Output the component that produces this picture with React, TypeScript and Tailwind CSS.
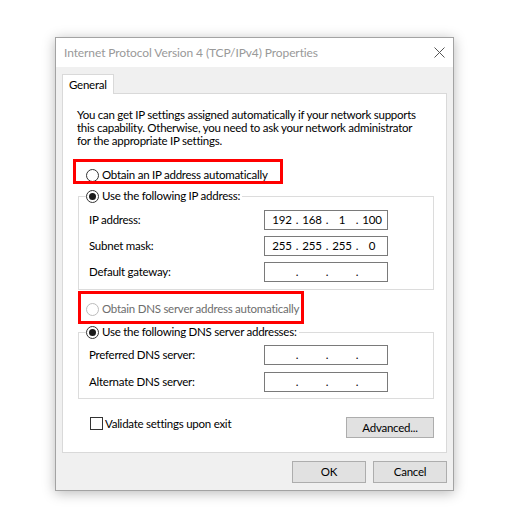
import React from 'react'

const FONT = { fontFamily: '"Segoe UI", Lato, "Noto Sans", sans-serif' }

function Radio({ checked = false, disabled = false }: { checked?: boolean; disabled?: boolean }) {
  return (
    <span
      className={`w-[13px] h-[13px] rounded-full border bg-white flex items-center justify-center shrink-0 ${
        disabled ? 'border-[#bcbcbc]' : 'border-[#333333]'
      }`}
    >
      {checked && <span className="w-[7px] h-[7px] rounded-full bg-[#1a1a1a]" />}
    </span>
  )
}

// windows ip control: 4 fields with dots between
function IpBox({ value }: { value?: string[] }) {
  const parts = value ?? ['', '', '', '']
  return (
    <div className="w-[124px] h-[20px] border border-[#7a7a7a] bg-white flex items-center pl-[5px] text-black">
      {parts.map((p, i) => (
        <React.Fragment key={i}>
          <span className="w-[24px] text-center">{p}</span>
          {i < 3 && <span className="w-[6px] text-center">.</span>}
        </React.Fragment>
      ))}
    </div>
  )
}

function Row({ label, value }: { label: string; value?: string[] }) {
  return (
    <div className="flex items-center h-[20px]">
      <span className="w-[175px]">{label}</span>
      <IpBox value={value} />
    </div>
  )
}

export default function App() {
  return (
    <div
      className="w-[523px] h-[532px] bg-white pt-[37px] pl-[55px] text-[11.5px] tracking-[-0.25px] text-black"
      style={FONT}
    >
      <div className="w-[399px] h-[454px] border border-[#a3a3a3] bg-[#f0f0f0] flex flex-col shadow-[0_2px_12px_rgba(0,0,0,0.28)]">
        {/* title bar */}
        <div className="h-[29px] bg-white flex items-center justify-between pl-[8px] pr-[8px] shrink-0">
          <span className="text-[#999999] text-[12px] tracking-[-0.1px]">
            Internet Protocol Version 4 (TCP/IPv4) Properties
          </span>
          <svg width="11" height="11" viewBox="0 0 11 11">
            <path d="M0.5 0.5L10.5 10.5M10.5 0.5L0.5 10.5" stroke="#555" strokeWidth="1" />
          </svg>
        </div>

        {/* body */}
        <div className="flex-1 flex flex-col px-[6px] pt-[7px]">
          <div className="flex">
            <div className="relative z-10 -mb-px h-[20px] px-[6px] bg-white border border-b-0 border-[#d9d9d9] flex items-center">
              General
            </div>
          </div>

          <div className="relative h-[360px] bg-white border border-[#d9d9d9] flex flex-col">
            <p className="pl-[14px] pt-[14px] leading-[13px] whitespace-nowrap">
              You can get IP settings assigned automatically if your network supports
              <br />
              this capability. Otherwise, you need to ask your network administrator
              <br />
              for the appropriate IP settings.
            </p>

            <div className="mt-[20px] ml-[23px] h-[16px] flex items-center gap-[3px]">
              <Radio />
              <span>Obtain an IP address automatically</span>
            </div>

            <fieldset className="mt-[5px] ml-[15px] w-[356px] border border-[#dcdcdc] pl-[10px] pt-[6px] pb-[7px]">
              <legend className="ml-[-3px] pr-[2px] h-[16px] flex items-center gap-[3px]">
                <Radio checked />
                <span>Use the following IP address:</span>
              </legend>
              <div className="flex flex-col gap-[6px]">
                <Row label="IP address:" value={['192', '168', '1', '100']} />
                <Row label="Subnet mask:" value={['255', '255', '255', '0']} />
                <Row label="Default gateway:" />
              </div>
            </fieldset>

            <div className="mt-[11px] ml-[23px] h-[16px] flex items-center gap-[3px] text-[#6d6d6d]">
              <Radio disabled />
              <span>Obtain DNS server address automatically</span>
            </div>

            <fieldset className="mt-[7px] ml-[15px] w-[356px] border border-[#dcdcdc] pl-[10px] pt-[5px] pb-[6px]">
              <legend className="ml-[-3px] pr-[2px] h-[16px] flex items-center gap-[3px]">
                <Radio checked />
                <span>Use the following DNS server addresses:</span>
              </legend>
              <div className="flex flex-col gap-[7px]">
                <Row label="Preferred DNS server:" />
                <Row label="Alternate DNS server:" />
              </div>
            </fieldset>

            <div className="mt-[18px] flex items-start justify-between pl-[27px] pr-[12px]">
              <div className="flex items-center gap-[2px] h-[13px]">
                <span className="w-[13px] h-[13px] border border-[#333333] bg-white" />
                <span>Validate settings upon exit</span>
              </div>
              <button className="w-[88px] h-[21px] bg-[#e1e1e1] border border-[#adadad] flex items-center justify-center">
                Advanced...
              </button>
            </div>

            {/* red annotation boxes */}
            <div className="absolute left-[10px] top-[65px] w-[210px] h-[25px] border-[3px] border-[#ff0000]" />
            <div className="absolute left-[15px] top-[197px] w-[226px] h-[33px] border-[3px] border-[#ff0000]" />
          </div>

          <div className="mt-[8px] flex justify-end gap-[7px]">
            <button className="w-[74px] h-[22px] bg-[#e1e1e1] border border-[#adadad]">OK</button>
            <button className="w-[74px] h-[22px] bg-[#e1e1e1] border border-[#adadad]">Cancel</button>
          </div>
        </div>
      </div>
    </div>
  )
}
